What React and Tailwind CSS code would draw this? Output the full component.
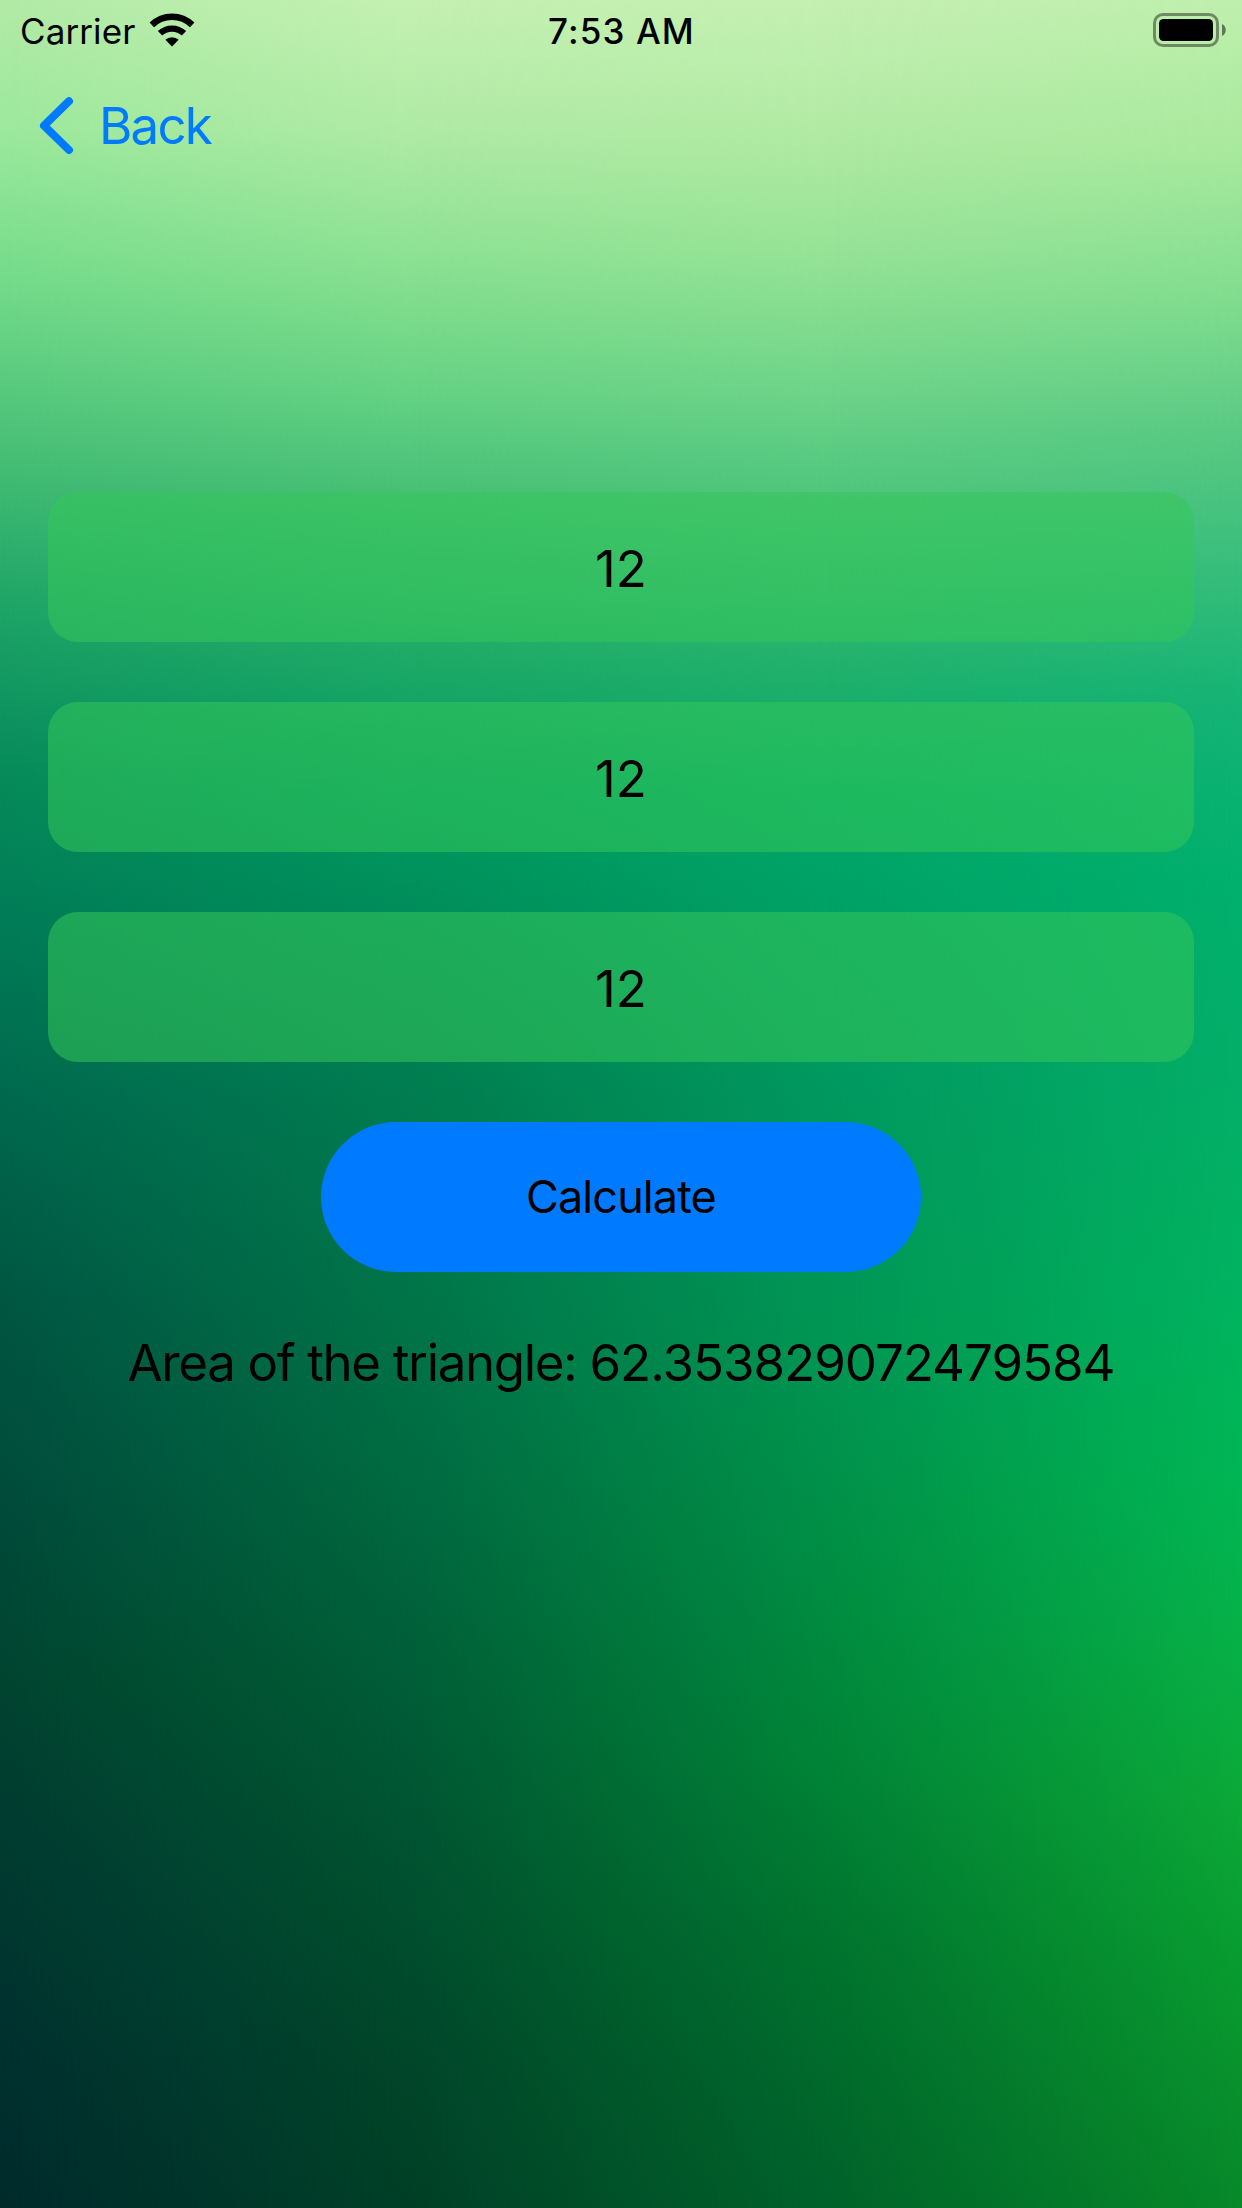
const columns = [
  {
    bg: "bg-[linear-gradient(to_bottom,#b3eaa6_0px,#9ce99c_130px,#74db8b_280px,#4bc177_440px,#1da467_610px,#078b5b_770px,#007a55_940px,#00674c_1120px,#005642_1300px,#004b3a_1500px,#00442f_1680px,#003930_1880px,#00302f_2060px,#002b2c_2208px)]",
    mask: "",
  },
  {
    bg: "bg-[linear-gradient(to_bottom,#c4f1b2_0px,#b0eaa4_130px,#8fe293_250px,#66d284_390px,#48c077_490px,#20aa68_650px,#009a60_800px,#008a5a_940px,#007c50_1100px,#007549_1290px,#006a40_1490px,#005d36_1690px,#00502e_1900px,#004529_2080px,#004027_2208px)]",
    mask: "[mask-image:linear-gradient(to_right,transparent_0%,black_33.33%)]",
  },
  {
    bg: "bg-[linear-gradient(to_bottom,#c4f0b3_0px,#b2eaa3_130px,#97e396_250px,#6ed489_390px,#51c67e_490px,#26b26e_650px,#00a866_800px,#00a065_930px,#00985e_1100px,#009654_1330px,#008f45_1540px,#008437_1760px,#00732e_1950px,#00682b_2100px,#00622a_2208px)]",
    mask: "[mask-image:linear-gradient(to_right,transparent_33.33%,black_66.66%)]",
  },
  {
    bg: "bg-[linear-gradient(to_bottom,#bfefac_0px,#a8e99d_150px,#80dc8f_300px,#5ac983_430px,#37bd7b_570px,#15b375_700px,#00b06c_880px,#03ae68_1080px,#00b35f_1300px,#00b654_1480px,#07b047_1650px,#0ba838_1800px,#089c30_1960px,#088f2c_2110px,#078829_2208px)]",
    mask: "[mask-image:linear-gradient(to_right,transparent_66.66%,black_100%)]",
  },
];

function Backdrop() {
  return (
    <div className="absolute inset-0">
      {columns.map((c, i) => (
        <div key={i} className={`absolute inset-0 ${c.bg} ${c.mask}`} />
      ))}
    </div>
  );
}

function WifiIcon() {
  return (
    <svg className="ml-[14px] h-[34px] w-[46px]" viewBox="0 0 46 34" fill="none">
      <path d="M2.8 11.9A29 29 0 0 1 43.2 11.9" stroke="black" strokeWidth="6.4" />
      <path d="M11 20.3A17.5 17.5 0 0 1 35 20.3" stroke="black" strokeWidth="6.2" />
      <path d="M16.3 26.8A10 10 0 0 1 29.7 26.8L23 33.4Z" fill="black" />
    </svg>
  );
}

function Field({ value }) {
  return (
    <div className="flex h-[150px] items-center justify-center rounded-[30px] bg-[#34c759]/55 pt-[4px] text-[51px]">
      {value}
    </div>
  );
}

export default function App() {
  return (
    <div className="relative h-[2208px] w-[1242px] overflow-hidden font-['Inter',sans-serif] text-black">
      <Backdrop />
      <div className="relative flex h-full flex-col">
        <header className="grid h-[60px] grid-cols-3 items-center pl-[20px] pr-[16px]">
          <div className="flex items-center text-[35px]">
            <span className="pt-[2px] tracking-[0.1px]">Carrier</span>
            <WifiIcon />
          </div>
          <div className="whitespace-nowrap pr-[3px] pt-[2px] text-center text-[35px] font-medium tracking-[1.1px]">7:53 AM</div>
          <svg className="h-[34px] w-[73px] justify-self-end" viewBox="0 0 73 34" fill="none">
            <rect x="1.5" y="1.5" width="63" height="31" rx="8.5" stroke="black" strokeOpacity=".42" strokeWidth="3" />
            <rect x="6" y="6" width="54" height="22" rx="4.5" fill="black" />
            <path d="M69 11C74 13 74 21 69 23Z" fill="black" fillOpacity=".5" />
          </svg>
        </header>
        <nav className="flex h-[132px] items-center pl-[38px] text-[51px] text-[#007aff]">
          <svg className="h-[60px] w-[38px]" viewBox="0 0 38 60" fill="none" stroke="currentColor" strokeWidth="8" strokeLinecap="round" strokeLinejoin="round">
            <path d="M31 5.200L6 29.700L31 54" />
          </svg>
          <span className="ml-[23px] tracking-[-1.8px]">Back</span>
        </nav>
        <main className="flex flex-col gap-[60px] px-[48px] pt-[300px]">
          <Field value="12" />
          <Field value="12" />
          <Field value="12" />
          <button className="h-[150px] w-[600px] self-center rounded-full bg-[#007aff] text-[45px] tracking-[-0.9px]">Calculate</button>
          <p className="whitespace-nowrap text-center text-[51px] leading-[62px] tracking-[-1.35px]">
            Area of the triangle: <span className="tracking-[-1px]">62.353829072479584</span>
          </p>
        </main>
      </div>
    </div>
  );
}
